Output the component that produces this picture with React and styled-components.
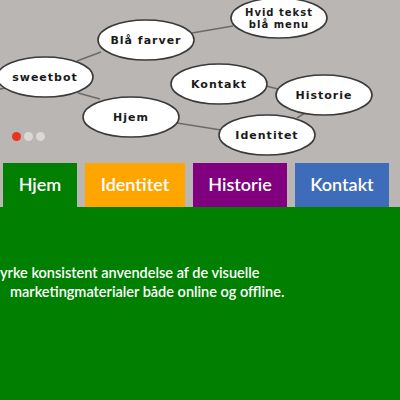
import React from 'react';
import styled, { createGlobalStyle } from 'styled-components';

const GlobalStyle = createGlobalStyle`
  html, body {
    margin: 0;
    padding: 0;
  }
  body {
    background: #bab6b3;
    font-family: Lato, "Open Sans", sans-serif;
    overflow: hidden;
  }
`;

const Page = styled.div`
  width: 400px;
  height: 400px;
  display: flex;
  flex-direction: column;
  overflow: hidden;
`;

const Slider = styled.div`
  position: relative;
  height: 163px;
  background: #bab6b3;
  flex-shrink: 0;
`;

const Dots = styled.div`
  position: absolute;
  left: 12px;
  top: 132px;
  display: flex;
  gap: 3px;
`;

const Dot = styled.span`
  width: 9px;
  height: 9px;
  border-radius: 50%;
  background: ${p => (p.$active ? '#e8361c' : '#dcd8d5')};
`;

const TabBar = styled.nav`
  display: flex;
  gap: 8px;
  padding-left: 3px;
  height: 44px;
  flex-shrink: 0;
`;

const Tab = styled.a`
  width: ${p => p.$w}px;
  background: ${p => p.$bg};
  color: #fff;
  display: flex;
  align-items: center;
  justify-content: center;
  padding-bottom: 2px;
  box-sizing: border-box;
  font-size: 18px;
  font-weight: 600;
  text-decoration: none;
`;

const Panel = styled.section`
  flex: 1;
  background: #007f00;
  padding-top: 56px;
  color: #fff;
  font-size: 14.5px;
  font-weight: 600;
  line-height: 19px;
`;

const Line = styled.div`
  padding-left: ${p => p.$indent || 0}px;
  white-space: nowrap;
`;

const nodes = [
  { x: 45, y: 77, label: ['sweetbot'] },
  { x: 146, y: 40, label: ['Blå farver'] },
  { x: 131, y: 117, label: ['Hjem'] },
  { x: 219, y: 84, label: ['Kontakt'] },
  { x: 279, y: 18, label: ['Hvid tekst', 'blå menu'] },
  { x: 324, y: 95, label: ['Historie'] },
  { x: 267, y: 135, label: ['Identitet'] },
];

const links = [
  [-4, 90, 5, 88],
  [77, 61, 101, 52],
  [78, 93, 100, 99],
  [192, 33, 233, 26],
  [177, 123, 221, 130],
  [266, 86, 278, 89],
  [305, 113, 297, 118],
];

function Diagram() {
  return (
    <svg width="400" height="163" viewBox="0 0 400 163">
      {links.map((l, i) => (
        <line key={i} x1={l[0]} y1={l[1]} x2={l[2]} y2={l[3]} stroke="#6d6a68" strokeWidth="1.6" />
      ))}
      {nodes.map((n, i) => {
        const multi = n.label.length > 1;
        return (
          <g key={i}>
            <ellipse cx={n.x} cy={n.y} rx="48" ry="20" fill="#fff" stroke="#3a3a3a" strokeWidth="1.6" />
            {n.label.map((t, j) => (
              <text
                key={j}
                x={n.x}
                y={n.y + 4 + (multi ? (j - 0.5) * 12.5 : 0)}
                textAnchor="middle"
                fontFamily="'DejaVu Sans', sans-serif"
                fontWeight="bold"
                fontSize={multi ? 10 : 11}
                letterSpacing="1"
                fill="#1a1a1a"
              >
                {t}
              </text>
            ))}
          </g>
        );
      })}
    </svg>
  );
}

export default function App() {
  return (
    <Page>
      <GlobalStyle />
      <Slider>
        <Diagram />
        <Dots>
          <Dot $active />
          <Dot />
          <Dot />
        </Dots>
      </Slider>
      <TabBar>
        <Tab $w={74} $bg="#007f00">Hjem</Tab>
        <Tab $w={100} $bg="#ffa500">Identitet</Tab>
        <Tab $w={94} $bg="#800080">Historie</Tab>
        <Tab $w={94} $bg="#3e6bba">Kontakt</Tab>
      </TabBar>
      <Panel>
        <Line>yrke konsistent anvendelse af de visuelle</Line>
        <Line $indent={10}>marketingmaterialer både online og offline.</Line>
      </Panel>
    </Page>
  );
}
